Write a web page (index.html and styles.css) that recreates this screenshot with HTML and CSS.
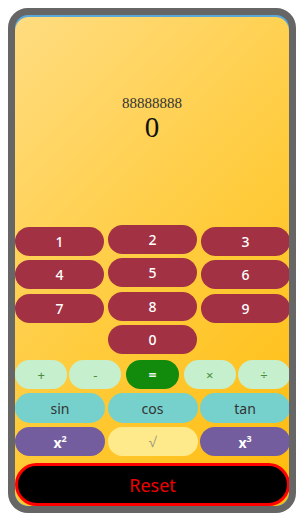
FILE: index.html
```html
<!DOCTYPE html>
<html lang="en">
  <head>
    <meta charset="UTF-8" />
    <meta name="viewport" content="width=device-width, initial-scale=1.0" />
    <title>Calculator</title>
    <link rel="stylesheet" href="styles.css">
  </head>
  <body>
    <div class="calc">
      <div class="face">
        <div class="display">
          <div class="history">88888888</div>
          <div class="result">0</div>
        </div>

        <div class="numpad">
          <button class="key num">1</button>
          <button class="key num mid">2</button>
          <button class="key num">3</button>
          <button class="key num">4</button>
          <button class="key num mid">5</button>
          <button class="key num">6</button>
          <button class="key num">7</button>
          <button class="key num mid">8</button>
          <button class="key num">9</button>
          <button class="key num mid zero">0</button>
        </div>

        <div class="ops">
          <button class="key op">+</button>
          <button class="key op">-</button>
          <button class="key equals">=</button>
          <button class="key op">×</button>
          <button class="key op">÷</button>
        </div>

        <div class="trig">
          <button class="key fn">sin</button>
          <button class="key fn">cos</button>
          <button class="key fn">tan</button>
        </div>

        <div class="powers">
          <button class="key pow">x<sup>2</sup></button>
          <button class="key root">√</button>
          <button class="key pow">x<sup>3</sup></button>
        </div>

        <button class="reset">Reset</button>
      </div>
    </div>
  </body>
</html>
```

FILE: styles.css
```css
* {
  box-sizing: border-box;
}

body {
  margin: 8px 4px 8px 8px;
  font-family: "Noto Sans", "Open Sans", sans-serif;
}

.calc {
  width: 288px;
  height: 505px;
  border: 7px solid #666;
  border-radius: 20px;
  background: #5ba8d8;
  padding-top: 2px;
  overflow: hidden;
}

.face {
  height: 100%;
  border-radius: 14px;
  background: linear-gradient(135deg, #ffdc80 0%, #ffcb3a 55%, #ffbb0c 100%);
  display: flex;
  flex-direction: column;
}

.display {
  flex: 1;
  display: flex;
  flex-direction: column;
  align-items: center;
  justify-content: center;
  font-family: "Liberation Serif", "DejaVu Serif", serif;
  padding-bottom: 8px;
}

.history {
  font-size: 15px;
  color: #333;
  line-height: 18px;
}

.result {
  font-size: 29px;
  line-height: 30px;
  color: #111;
}

.key {
  border: none;
  font-family: inherit;
  padding: 0;
  height: 29px;
  border-radius: 15px;
  font-size: 14px;
  cursor: pointer;
}

.numpad {
  display: grid;
  grid-template-columns: repeat(3, 1fr);
  column-gap: 4px;
  row-gap: 4.3px;
  margin-right: -1px;
}

.num {
  background: #a33144;
  color: #fff;
  font-weight: 500;
}

.num.mid {
  transform: translateY(-2px);
}

.num.zero {
  grid-column: 2;
}

.ops {
  display: flex;
  gap: 2px;
  margin-top: 4px;
  margin-right: -1px;
}

.ops .key {
  flex: 1;
}

.op {
  background: #c6efcd;
  color: #4d8a3e;
  font-size: 13px;
}

.equals {
  background: #128a0b;
  color: #e8f4e6;
  font-weight: 700;
  margin: 0 3px;
}

.trig,
.powers {
  display: grid;
  grid-template-columns: repeat(3, 1fr);
  column-gap: 2.5px;
  margin-right: -1px;
}

.trig {
  margin-top: 4px;
}

.trig .key {
  height: 30px;
}

.powers {
  margin-top: 4px;
}

.fn {
  background: #76d0cc;
  color: #333;
}

.pow {
  background: #735d9e;
  color: #fff;
  font-weight: 700;
}

.pow sup {
  font-size: 9px;
}

.root {
  background: #ffea8b;
  color: #a09a80;
}

.reset {
  margin-top: 7px;
  margin-right: -1px;
  height: 43px;
  border: 3px solid #f00;
  border-radius: 22px;
  background: #000;
  color: #e00;
  font-family: inherit;
  font-size: 18px;
}
```
